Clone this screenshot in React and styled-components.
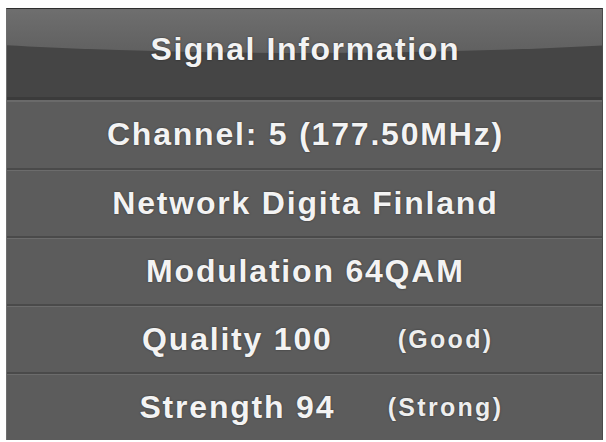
import React from "react";
import styled, { createGlobalStyle } from "styled-components";

const GlobalStyle = createGlobalStyle`
  html, body {
    margin: 0;
    padding: 0;
    background: #ffffff;
  }
  body {
    font-family: "Liberation Sans", Arial, sans-serif;
  }
`;

const rows = [
  { label: "Channel: 5 (177.50MHz)" },
  { label: "Network Digita Finland" },
  { label: "Modulation 64QAM" },
  { label: "Quality 100", note: "(Good)" },
  { label: "Strength 94", note: "(Strong)" },
];

const SignalInfo = () => {
  return (
    <Panel>
      <Header>
        <Title>Signal Information</Title>
      </Header>
      {rows.map((row) => (
        <Row key={row.label} $split={!!row.note}>
          <Label>{row.label}</Label>
          {row.note && <Note>{row.note}</Note>}
        </Row>
      ))}
    </Panel>
  );
};

const Panel = styled.div`
  box-sizing: border-box;
  margin: 8px 0 0 6px;
  width: 597px;
  background: #5b5b5b;
  border-top: 1px solid #2e2e2e;
  border-left: 1px solid #6e6e6e;
  border-right: 1px solid #4a4a4a;
  overflow: hidden;
`;

const Header = styled.div`
  position: relative;
  box-sizing: border-box;
  height: 91px;
  padding-bottom: 8px;
  display: flex;
  align-items: center;
  justify-content: center;
  background: #454545;
  border-bottom: 3px solid #3b3b3b;
  overflow: hidden;

  &::before {
    content: "";
    position: absolute;
    left: -110%;
    top: -260px;
    width: 320%;
    height: 304px;
    border-radius: 50%;
    background: linear-gradient(180deg, #747474 80%, #606060 100%);
  }
`;

const Title = styled.div`
  position: relative;
  font-size: 32px;
  font-weight: 700;
  letter-spacing: 1.6px;
  margin-right: -1.6px;
  color: #f3f3f3;
  text-shadow: 0 0 2px rgba(0, 0, 0, 0.55);
`;

const Row = styled.div`
  box-sizing: border-box;
  height: 68px;
  display: grid;
  grid-template-columns: ${(p) => (p.$split ? "282px 136px" : "auto")};
  justify-content: center;
  align-items: center;
  background: #5c5c5c;
  border-top: 2px solid #4a4a4a;
  box-shadow: inset 0 1px 0 #6c6c6c;

  &:nth-of-type(2) {
    border-top: none;
    box-shadow: inset 0 2px 0 #6a6a6a;
  }
`;

const Label = styled.div`
  text-align: center;
  font-size: 32px;
  font-weight: 700;
  letter-spacing: 1.8px;
  margin-right: -1.8px;
  color: #f3f3f3;
  white-space: nowrap;
  text-shadow: 0 0 2px rgba(0, 0, 0, 0.5);
`;

const Note = styled.div`
  text-align: center;
  font-size: 25px;
  font-weight: 700;
  letter-spacing: 2.3px;
  color: #eeeeee;
  white-space: nowrap;
  text-shadow: 0 0 2px rgba(0, 0, 0, 0.5);
`;

export default function App() {
  return (
    <>
      <GlobalStyle />
      <SignalInfo />
    </>
  );
}
